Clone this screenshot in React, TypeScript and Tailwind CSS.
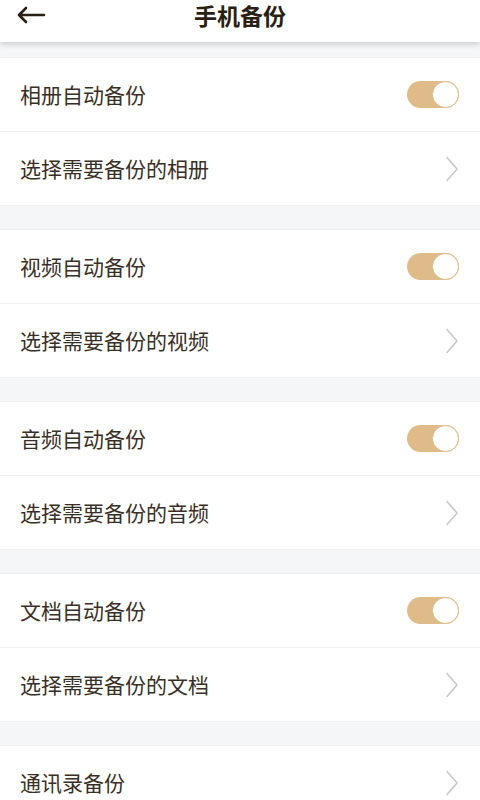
import React, { useState } from "react";

type Group = {
  toggle: string;
  select: string;
};

const groups: Group[] = [
  { toggle: "相册自动备份", select: "选择需要备份的相册" },
  { toggle: "视频自动备份", select: "选择需要备份的视频" },
  { toggle: "音频自动备份", select: "选择需要备份的音频" },
  { toggle: "文档自动备份", select: "选择需要备份的文档" },
];

function Toggle({ on, onClick }: { on: boolean; onClick: () => void }) {
  return (
    <button
      type="button"
      onClick={onClick}
      className={`relative w-[52px] h-[27px] rounded-full flex items-center ${
        on ? "bg-[#dfbb8a]" : "bg-[#e5e5e5]"
      }`}
    >
      <span
        className={`absolute top-0 w-[27px] h-[27px] rounded-full bg-white border-[1.5px] ${
          on ? "right-0 border-[#dfbb8a]" : "left-0 border-[#e5e5e5]"
        }`}
      />
    </button>
  );
}

function Chevron() {
  return (
    <svg width="14" height="26" viewBox="0 0 14 26" fill="none">
      <path d="M2 1.5L12 13L2 24.5" stroke="#c8c8c8" strokeWidth="1.6" strokeLinecap="round" strokeLinejoin="round" />
    </svg>
  );
}

function Row({ label, children, divider }: { label: string; children: React.ReactNode; divider?: boolean }) {
  return (
    <div
      className={`flex items-center justify-between pl-[20px] pr-[21px] ${
        divider ? "h-[74px] border-t border-[#f2f2f2]" : "h-[73px]"
      }`}
    >
      <span className="text-[21px] text-[#3a2f26]">{label}</span>
      {children}
    </div>
  );
}

export default function App() {
  const [toggles, setToggles] = useState([true, true, true, true]);

  return (
    <div
      className="w-[480px] h-[800px] overflow-hidden bg-[#f5f6f8]"
      style={{ fontFamily: '"Noto Sans CJK SC", "Noto Sans", sans-serif' }}
    >
      <header className="h-[42px] bg-white relative flex items-start justify-center pt-[1px] shadow-[0_2px_6px_rgba(0,0,0,0.18)] z-10">
        <button type="button" className="absolute left-[16px] top-[6px]">
          <svg width="30" height="18" viewBox="0 0 30 18" fill="none">
            <path d="M28 9H3M10 2L3 9L10 16" stroke="#2a1f15" strokeWidth="2.6" strokeLinecap="round" strokeLinejoin="round" />
          </svg>
        </button>
        <h1 className="text-[23px] leading-[29px] font-bold text-[#2a1f15]">手机备份</h1>
      </header>

      <div className="pt-[15px] flex flex-col gap-[23px]">
        {groups.map((g, i) => (
          <section key={g.select} className="bg-white border-y border-[#eeeff1]">
            <Row label={g.toggle}>
              <Toggle
                on={toggles[i]}
                onClick={() => setToggles((t) => t.map((v, j) => (j === i ? !v : v)))}
              />
            </Row>
            <Row label={g.select} divider>
              <Chevron />
            </Row>
          </section>
        ))}
        <section className="bg-white border-y border-[#eeeff1]">
          <Row label="通讯录备份">
            <Chevron />
          </Row>
        </section>
      </div>
    </div>
  );
}
